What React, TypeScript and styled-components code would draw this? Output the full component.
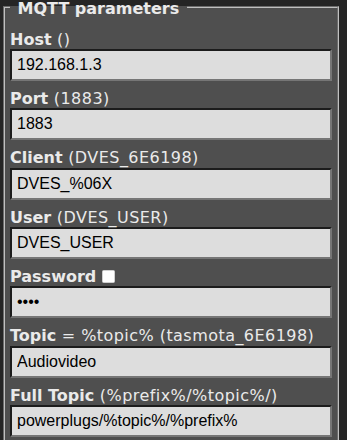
import styled, { createGlobalStyle } from "styled-components";

const GlobalStyle = createGlobalStyle`
  html, body {
    margin: 0;
    padding: 0;
    background: #252525;
    overflow: hidden;
  }
  body {
    font-family: "DejaVu Sans", Verdana, sans-serif;
    font-size: 16px;
    color: #eaeaea;
  }
`;

const Page = styled.div`
  width: 347px;
  height: 440px;
  padding: 0 8px 0 3px;
  box-sizing: border-box;
  overflow: hidden;
`;

const Fieldset = styled.fieldset`
  margin: -4px 0 0 0;
  padding: 4px 5px 5px 5px;
  background: #4f4f4f;
  border: 2px groove #c0c0c0;
  min-inline-size: 0;
`;

const Legend = styled.legend`
  padding: 2.6px 2px 0 2px;
  line-height: normal;
  font-weight: bold;
  color: #eaeaea;
  white-space: pre;
`;

const Field = styled.p`
  margin: 8px 0;
`;

const Label = styled.div`
  line-height: 19.45px;
  white-space: nowrap;
`;

const Hint = styled.span`
  letter-spacing: 0.45px;
`;

const Checkbox = styled.span`
  display: inline-block;
  width: 11px;
  height: 11px;
  margin-left: 6px;
  vertical-align: -1px;
  background: #ffffff;
  border: 0.5px solid #d0d0d0;
  border-radius: 1.5px;
`;

const Input = styled.input`
  display: block;
  width: 100%;
  height: 31.875px;
  box-sizing: border-box;
  margin: 0;
  padding: 5px;
  font-family: "Liberation Sans", Arial, sans-serif;
  font-size: 16px;
  color: #000000;
  background: #dddddd;
  border-width: 2px;
  border-style: solid;
  border-color: #1c1c1c #767676 #767676 #1c1c1c;
  border-radius: 0;
  outline: none;
`;

type Param = {
  name: string;
  hint: string;
  value: string;
  password?: boolean;
};

const params: Param[] = [
  { name: "Host", hint: " ()", value: "192.168.1.3" },
  { name: "Port", hint: " (1883)", value: "1883" },
  { name: "Client", hint: " (DVES_6E6198)", value: "DVES_%06X" },
  { name: "User", hint: " (DVES_USER)", value: "DVES_USER" },
  { name: "Password", hint: "", value: "****", password: true },
  { name: "Topic", hint: " = %topic% (tasmota_6E6198)", value: "Audiovideo" },
  { name: "Full Topic", hint: " (%prefix%/%topic%/)", value: "powerplugs/%topic%/%prefix%" },
];

export default function App() {
  return (
    <>
      <GlobalStyle />
      <Page>
        <Fieldset>
          <Legend>{"\u00a0MQTT parameters\u00a0"}</Legend>
          <form onSubmit={(e) => e.preventDefault()}>
            {params.map((p) => (
              <Field key={p.name}>
                <Label>
                  <b>{p.name}</b>
                  {p.hint && <Hint>{p.hint}</Hint>}
                  {p.password && <Checkbox />}
                </Label>
                <Input
                  type={p.password ? "password" : "text"}
                  defaultValue={p.value}
                  placeholder={p.name}
                />
              </Field>
            ))}
          </form>
        </Fieldset>
      </Page>
    </>
  );
}
